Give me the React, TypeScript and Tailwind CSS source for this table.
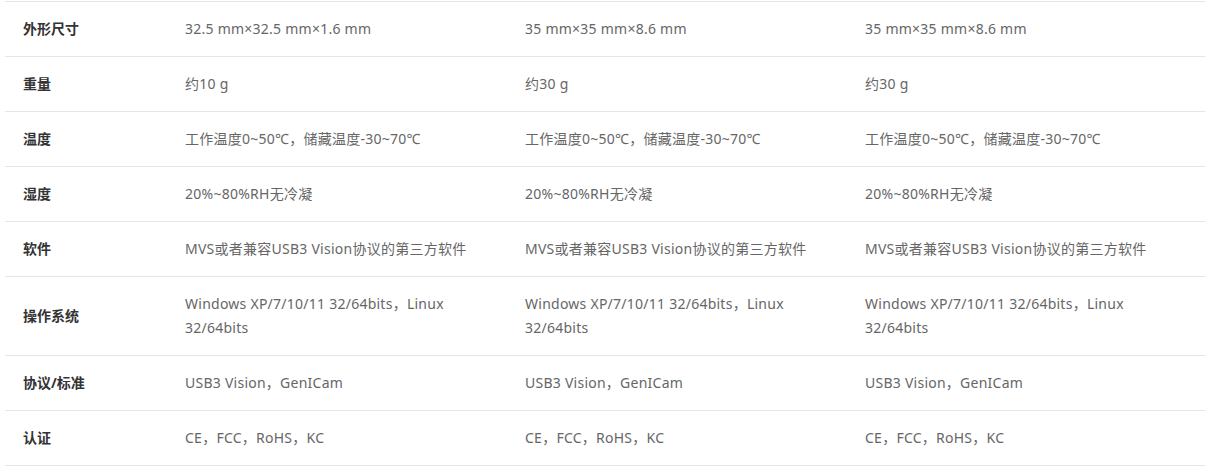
const rows: { label: string; values: string[] }[] = [
  { label: '外形尺寸', values: ['32.5 mm×32.5 mm×1.6 mm', '35 mm×35 mm×8.6 mm', '35 mm×35 mm×8.6 mm'] },
  { label: '重量', values: ['约10 g', '约30 g', '约30 g'] },
  {
    label: '温度',
    values: ['工作温度0~50℃，储藏温度-30~70℃', '工作温度0~50℃，储藏温度-30~70℃', '工作温度0~50℃，储藏温度-30~70℃'],
  },
  { label: '湿度', values: ['20%~80%RH无冷凝', '20%~80%RH无冷凝', '20%~80%RH无冷凝'] },
  {
    label: '软件',
    values: [
      'MVS或者兼容USB3 Vision协议的第三方软件',
      'MVS或者兼容USB3 Vision协议的第三方软件',
      'MVS或者兼容USB3 Vision协议的第三方软件',
    ],
  },
  {
    label: '操作系统',
    values: [
      'Windows XP/7/10/11 32/64bits，Linux 32/64bits',
      'Windows XP/7/10/11 32/64bits，Linux 32/64bits',
      'Windows XP/7/10/11 32/64bits，Linux 32/64bits',
    ],
  },
  { label: '协议/标准', values: ['USB3 Vision，GenICam', 'USB3 Vision，GenICam', 'USB3 Vision，GenICam'] },
  { label: '认证', values: ['CE，FCC，RoHS，KC', 'CE，FCC，RoHS，KC', 'CE，FCC，RoHS，KC'] },
];

export default function App() {
  return (
    <div
      className="bg-white w-[1210px] h-[467px] overflow-hidden px-[5px]"
      style={{ fontFamily: '"Noto Sans", "Noto Sans CJK SC", sans-serif' }}
    >
      <div className="border-t border-[#e6e6e6] mt-px">
        {rows.map((row) => (
          <div
            key={row.label}
            className="grid grid-cols-[162px_340px_340px_358px] border-b border-[#e6e6e6] text-[14px] leading-[24px]"
          >
            <div className="flex items-center px-[18px] py-[15px] font-bold text-[#333]">{row.label}</div>
            {row.values.map((v, i) => (
              <div key={i} className="pl-[18px] pr-[18px] last:pr-[36px] py-[15px] text-[#666] tracking-[0.25px]">
                {v}
              </div>
            ))}
          </div>
        ))}
      </div>
    </div>
  );
}
